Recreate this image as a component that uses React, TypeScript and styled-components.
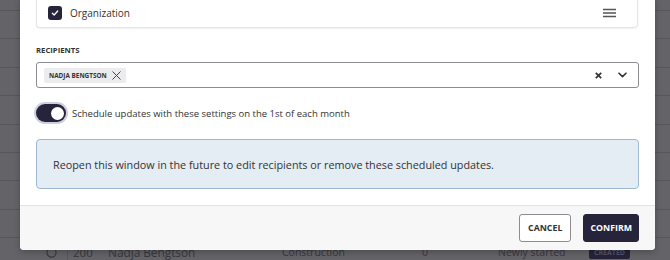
import React from "react";
import styled, { createGlobalStyle } from "styled-components";

const Global = createGlobalStyle`
  html, body { margin: 0; padding: 0; }
  body { font-family: "Open Sans", "Noto Sans", sans-serif; color: #333; }
  * { box-sizing: border-box; }
`;

const Stage = styled.div`
  position: relative;
  width: 670px;
  height: 260px;
  overflow: hidden;
  background: #646368;
`;

const Table = styled.div`
  display: flex;
  flex-direction: column;
  padding-top: 10px;
`;

const TRow = styled.div`
  height: 28.4px;
  border-top: 1px solid #57565b;
  display: flex;
  align-items: center;
  font-size: 10.5px;
  color: #38373d;
  padding-top: 1px;
`;

const TCell = styled.div<{ $w: number; $size?: number }>`
  width: ${(p) => p.$w}px;
  flex: none;
  white-space: nowrap;
  display: flex;
  align-items: center;
  ${(p) => (p.$size ? `font-size: ${p.$size}px;` : "")}
`;

const Sep = styled.div`
  width: 1px;
  align-self: stretch;
  background: #57565b;
  margin-right: 5px;
`;

const Badge = styled.span`
  background: #25243a;
  color: #55546a;
  font-size: 7px;
  font-weight: 700;
  padding: 2px 5px;
  border-radius: 2px;
`;

const Modal = styled.div`
  position: absolute;
  left: 20px;
  top: -2px;
  width: 635px;
  background: #fff;
  border-radius: 0 0 4px 4px;
  box-shadow: 0 2px 6px rgba(0, 0, 0, 0.25);
  overflow: hidden;
`;

const Body = styled.div`
  padding: 0 16px 16px 16px;
  display: flex;
  flex-direction: column;
`;

const ColumnCard = styled.div`
  height: 30px;
  border: 1px solid #e4e4e6;
  border-top: none;
  border-radius: 0 0 4px 4px;
  box-shadow: 0 1px 2px rgba(0, 0, 0, 0.06);
  display: flex;
  align-items: center;
  padding: 0 21px 0 11px;
  width: 602px;
`;

const Check = styled.span`
  width: 14px;
  height: 14px;
  border-radius: 3px;
  background: #25243a;
  display: inline-flex;
  align-items: center;
  justify-content: center;
  margin-right: 8px;
`;

const CardLabel = styled.span`
  font-size: 10px;
  color: #333;
  flex: 1;
  padding-top: 1px;
`;

const FieldLabel = styled.div`
  margin-top: 16px;
  font-size: 7.7px;
  font-weight: 700;
  line-height: 12px;
  color: #333;
`;

const Select = styled.div`
  margin-top: 6px;
  height: 26px;
  border: 1px solid #8d8c92;
  border-radius: 3px;
  display: flex;
  align-items: center;
  padding: 0 11px 0 7px;
`;

const Chip = styled.span`
  display: inline-flex;
  align-items: center;
  height: 15px;
  padding: 0 5px 0 5px;
  background: #ececef;
  border-radius: 2px;
  font-size: 6.4px;
  font-weight: 700;
  color: #333;
  gap: 5px;
`;

const Spacer = styled.div`
  flex: 1;
`;

const IconBtn = styled.span<{ $mr?: number }>`
  display: inline-flex;
  align-items: center;
  margin-right: ${(p) => p.$mr ?? 0}px;
`;

const ToggleRow = styled.div`
  margin-top: 16px;
  display: flex;
  align-items: center;
  gap: 6px;
`;

const Toggle = styled.span`
  width: 30px;
  height: 18px;
  border-radius: 9px;
  background: #25243a;
  box-shadow: 0 0 0 2px #cfcde0;
  display: inline-flex;
  align-items: center;
  justify-content: flex-end;
  padding: 0 2px;
`;

const Knob = styled.span`
  width: 13px;
  height: 13px;
  border-radius: 50%;
  background: #fff;
`;

const ToggleText = styled.span`
  font-size: 9.5px;
  color: #333;
`;

const Info = styled.div`
  margin-top: 17px;
  height: 50px;
  background: #e4ecf4;
  border: 1px solid #9fb9d3;
  border-radius: 4px;
  display: flex;
  align-items: center;
  padding: 0 16px;
  font-size: 10.8px;
  color: #333;
`;

const Footer = styled.div`
  border-top: 1px solid #e3e3e3;
  background: #f7f7f7;
  padding: 8px 16px 8px 0;
  display: flex;
  justify-content: flex-end;
  gap: 12px;
`;

const Button = styled.button<{ $primary?: boolean }>`
  height: 28px;
  padding: 0 ${(p) => (p.$primary ? 6 : 8)}px;
  border-radius: 3px;
  font-family: "Open Sans", "Noto Sans", sans-serif;
  font-size: 8.8px;
  font-weight: 700;
  border: 1px solid ${(p) => (p.$primary ? "#25243a" : "#8d8c92")};
  background: ${(p) => (p.$primary ? "#25243a" : "#fff")};
  color: ${(p) => (p.$primary ? "#fff" : "#333")};
`;

const rows = Array.from({ length: 8 });

export default function App() {
  return (
    <Stage>
      <Global />
      <Table>
        {rows.map((_, i) => (
          <TRow key={i} />
        ))}
        <TRow>
          <TCell $w={46} />
          <TCell $w={21}>
            <svg width="11" height="11" viewBox="0 0 12 12">
              <circle cx="6" cy="6" r="5" fill="none" stroke="#38373d" strokeWidth="1.2" />
            </svg>
          </TCell>
          <Sep />
          <TCell $w={35} $size={11.5}>200</TCell>
          <TCell $w={174} $size={11.8}>Nadja Bengtson</TCell>
          <TCell $w={140}>Construction</TCell>
          <TCell $w={76}>0</TCell>
          <TCell $w={91}>Newly started</TCell>
          <TCell $w={40}>
            <Badge>CREATED</Badge>
          </TCell>
        </TRow>
      </Table>
      <Modal>
        <Body>
          <ColumnCard>
            <Check>
              <svg width="8" height="8" viewBox="0 0 8 8">
                <path d="M1.3 4.2 L3.2 6 L6.7 2" fill="none" stroke="#fff" strokeWidth="1.3" strokeLinecap="round" strokeLinejoin="round" />
              </svg>
            </Check>
            <CardLabel>Organization</CardLabel>
            <svg width="13" height="10" viewBox="0 0 13 10">
              <path d="M0 1.5 H13 M0 5 H13 M0 8.5 H13" stroke="#555" strokeWidth="1.3" />
            </svg>
          </ColumnCard>
          <FieldLabel>RECIPIENTS</FieldLabel>
          <Select>
            <Chip>
              NADJA BENGTSON
              <svg width="9" height="9" viewBox="0 0 9 9">
                <path d="M0.5 0.5 L8.5 8.5 M8.5 0.5 L0.5 8.5" stroke="#444" strokeWidth="1" />
              </svg>
            </Chip>
            <Spacer />
            <IconBtn $mr={16}>
              <svg width="7" height="7" viewBox="0 0 7 7">
                <path d="M0.8 0.8 L6.2 6.2 M6.2 0.8 L0.8 6.2" stroke="#333" strokeWidth="1.7" />
              </svg>
            </IconBtn>
            <IconBtn>
              <svg width="9" height="6" viewBox="0 0 9 6">
                <path d="M1 1.2 L4.5 4.6 L8 1.2" fill="none" stroke="#333" strokeWidth="1.6" strokeLinecap="round" strokeLinejoin="round" />
              </svg>
            </IconBtn>
          </Select>
          <ToggleRow>
            <Toggle>
              <Knob />
            </Toggle>
            <ToggleText>Schedule updates with these settings on the 1st of each month</ToggleText>
          </ToggleRow>
          <Info>Reopen this window in the future to edit recipients or remove these scheduled updates.</Info>
        </Body>
        <Footer>
          <Button>CANCEL</Button>
          <Button $primary>CONFIRM</Button>
        </Footer>
      </Modal>
    </Stage>
  );
}
